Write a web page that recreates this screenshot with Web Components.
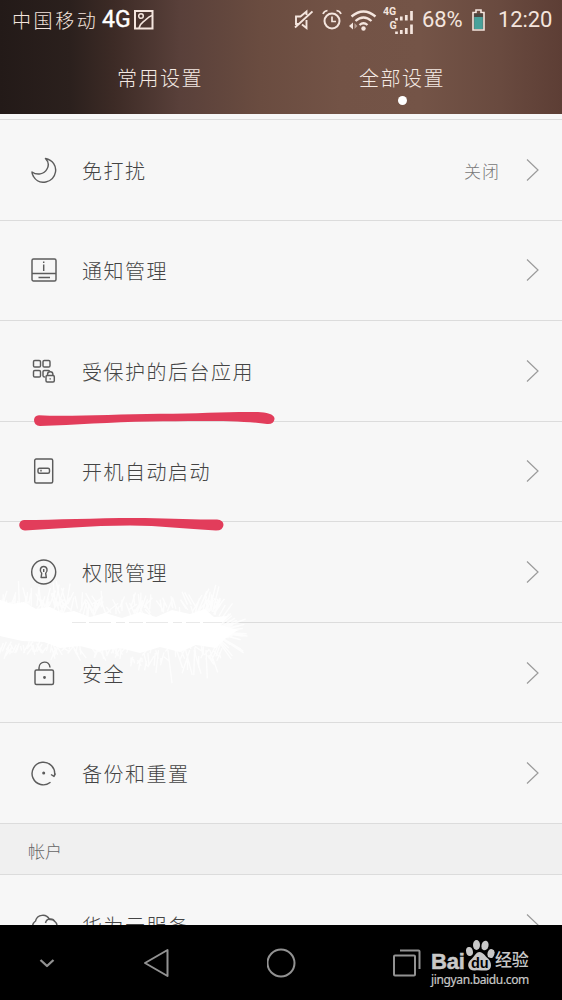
<!DOCTYPE html>
<html lang="zh-CN">
<head>
<meta charset="UTF-8">
<title>设置</title>
<style>
    body {
        margin: 0;
        width: 562px;
        height: 1000px;
        overflow: hidden;
        background: #f7f7f7;
        font-family: 'Noto Sans CJK SC', sans-serif;
        font-weight: 300;
    }
</style>
</head>
<body>
<settings-screen></settings-screen>
<script>
const ICONS = {
    moon: '<path d="M15.500 2.500C23 4 26.500 10 25.500 16C23.500 27 9 30 3.500 20.500C2.500 19 2 17.500 2 16C7 19.500 14 18.500 17 13C19 9.500 18.500 5.500 15.500 2.500Z"/>',
    notice: '<rect x="2" y="3" width="24" height="22" rx="1.500"/><path d="M2 17.500H26M8.500 21.500H20M13.700 8.500V15M13.700 5.600V7"/>',
    apps: '<rect x="3.500" y="3.500" width="7" height="6.500" rx="1.300"/><rect x="13" y="3.500" width="7" height="6.500" rx="1.300"/><rect x="3.500" y="13.500" width="7" height="6.500" rx="1.300"/><path d="M15 20Q13 20 13 18.700V14.700Q13 13.500 14.300 13.500H18.500Q19.500 13.500 19.700 14.500"/><rect x="16" y="18.500" width="8.300" height="6.500" rx="1.200"/><path d="M17.500 18.500V17.500a2.700 2.700 0 0 1 5.400 0V18.500M20.200 21.300V22.500"/>',
    boot: '<rect x="4.700" y="2" width="18" height="24" rx="1.500"/><rect x="8" y="11.200" width="11.500" height="5" rx="1.500"/><path d="M11 12.800V14.500"/>',
    permission: '<circle cx="13.700" cy="14" r="12"/><path d="M11.700 15.300C9.200 13 10.200 8.500 13.700 8.500S18.200 13 15.700 15.300L16.300 19.500H11.100L11.700 15.300Z"/><path d="M13.700 11V14"/>',
    security: '<rect x="5" y="11" width="18.500" height="14.500" rx="1.500"/><path d="M9 11V9C9 1.500 19.500 1 20 8.500"/><circle cx="14.500" cy="18.500" r=".7"/>',
    backup: '<path d="M20.500 23.300A11.300 11.300 0 1 1 24.500 16.500M21 15.500L24 17.400L25.500 14.500"/><circle cx="13.700" cy="14" r=".8"/>',
    cloud: '<path d="M5.500 22A7.500 7.500 0 0 1 5.500 10A7.500 7.500 0 0 1 19.500 8.500A6 6 0 0 1 21 22ZM15.500 12A5 5 0 0 1 25 11"/>'
};

class LineIcon extends HTMLElement {
    constructor() {
        super();
        this.attachShadow({ mode: 'open' });
    }

    connectedCallback() {
        this.shadowRoot.innerHTML = `
            <style>
                :host { display: block; width: 28px; height: 28px; flex: none; }
                svg { display: block; fill: none; stroke: #5c5c5c; stroke-width: 1.45; stroke-linejoin: round; }
            </style>
            <svg width="28" height="28" viewBox="0 0 28 28">${ICONS[this.getAttribute('name')]}</svg>
        `;
    }
}
customElements.define('line-icon', LineIcon);

class StatusBar extends HTMLElement {
    constructor() {
        super();
        this.attachShadow({ mode: 'open' }).innerHTML = `
            <style>
                :host {
                    display: flex;
                    align-items: center;
                    box-sizing: border-box;
                    height: 40px;
                    padding: 0 10px 0 12px;
                    color: #f4e5de;
                    font-family: Roboto, sans-serif;
                    font-weight: 400;
                    line-height: 40px;
                    white-space: nowrap;
                }
                .carrier { font: 300 19px/40px 'Noto Sans CJK SC', sans-serif; letter-spacing: 2.600px; width: 90px; }
                .network { font-size: 23px; font-weight: 400; color: #fff; width: 32px; -webkit-text-stroke: .4px #fff; }
                .spacer { flex: 1; }
                .percent { font-size: 22px; width: 50px; letter-spacing: -.1px; }
                .time { font-size: 22px; width: 54px; letter-spacing: -.1px; }
                svg { display: block; flex: none; fill: none; stroke: currentColor; stroke-width: 2; }
                .fill { fill: currentColor; stroke: none; }
            </style>
            <span class="carrier">中国移动</span>
            <span class="network">4G</span>
            <svg width="20" height="20" viewBox="0 0 20 20"><rect x="1" y="1" width="17.500" height="17.500"/><circle cx="7" cy="6" r="2.300" stroke-width="1.500"/><path d="M5 18C6 13 9 12.500 12 9.500C14 7.500 16 6 18 5.500" stroke-width="1.700"/></svg>
            <span class="spacer"></span>
            <svg style="margin-right:9px" width="19" height="22" viewBox="0 0 19 22"><path d="M5.500 15H2V7.500H6.500L12.500 2.500V6M12.500 11V19L8 15.500M18.500 2.500L1 18.500" stroke-width="1.900"/></svg>
            <svg style="margin-right:7px" width="20" height="22" viewBox="0 0 20 22"><circle cx="10" cy="12" r="7.500"/><path d="M10 7.500V12.500H14M1 5Q2 2 5.500 1.500M19 5Q18 2 14.500 1.500" stroke-width="1.700"/></svg>
            <svg style="margin-right:6px" width="28" height="24" viewBox="0 0 28 24"><path d="M2.500 8.500Q14.500 -1.500 26.500 8.500M6.500 13Q14.500 6 22.500 13M10.500 17Q14.500 13.500 18.500 17" stroke-width="2.300"/><circle class="fill" cx="14.500" cy="20.500" r="2.200"/><path class="fill" d="M0 18L4 14.500V21.500Z"/><path class="fill" d="M8.500 18L5.500 15V21Z" opacity=".5"/></svg>
            <svg style="margin-right:8px" width="31" height="30" viewBox="0 0 31 30"><text class="fill" x="0" y="10" font-size="10.500" font-weight="700">4G</text><text class="fill" x="6.500" y="23.500" font-size="10.500" font-weight="700">G</text><path d="M13.500 13V15.500M18.300 11.500V15.500M23.300 10V15.500M28.500 6V15.500M13.500 26.500V29M18.300 25V29M23.300 23V29M28.500 19.500V29" stroke-width="2.700"/></svg>
            <span class="percent">68%</span>
            <svg style="margin-right:13px" width="13" height="22" viewBox="0 0 13 22"><path d="M1 3.500H4V1H9V3.500H12V21H1Z" stroke-width="1.600"/><path d="M2.200 4.500H10.800V8H2.200Z" fill="#4c4741" stroke="none"/><path d="M2.200 8H10.800V20H2.200Z" fill="#48a19a" stroke="none"/></svg>
            <span class="time">12:20</span>
        `;
    }
}
customElements.define('status-bar', StatusBar);

class TabHeader extends HTMLElement {
    constructor() {
        super();
        this.attachShadow({ mode: 'open' }).innerHTML = `
            <style>
                :host {
                    display: block;
                    height: 114px;
                    background: linear-gradient(90deg, #231a18 0, #2b201d 70px, #3d2b26 115px, #59403a 180px, #6a4c40 260px, #735346 340px, #745447 420px, #694a3f 500px, #5d3e35 562px);
                }
                .tabs { display: grid; grid-template-columns: 242px 242px; padding-left: 39px; }
                .tab {
                    display: flex;
                    flex-direction: column;
                    align-items: center;
                    height: 74px;
                    box-sizing: border-box;
                    padding-top: 23px;
                    color: #f4e9e3;
                    font-size: 20px;
                    line-height: 30px;
                    letter-spacing: 1.500px;
                }
                .dot { width: 9px; height: 9px; border-radius: 50%; background: #fff; margin-top: 3px; }
            </style>
            <status-bar></status-bar>
            <div class="tabs">
                <div class="tab"><span>常用设置</span></div>
                <div class="tab"><span>全部设置</span><div class="dot"></div></div>
            </div>
        `;
    }
}
customElements.define('tab-header', TabHeader);

class SettingRow extends HTMLElement {
    constructor() {
        super();
        this.attachShadow({ mode: 'open' });
    }

    connectedCallback() {
        this.shadowRoot.innerHTML = `
            <style>
                :host {
                    display: flex;
                    align-items: center;
                    box-sizing: border-box;
                    height: 100.57px;
                    padding: 0 23px 0 30px;
                    border-bottom: 1px solid #dcdcdc;
                    color: #444;
                }
                .label { flex: 1; margin-left: 24px; font-size: 20px; line-height: 30px; letter-spacing: 1.500px; padding-top: 2px; }
                .value { color: #777; font-size: 17px; line-height: 28px; letter-spacing: 1px; margin-right: 26px; padding-top: 2px; }
                .arrow { display: block; fill: none; stroke: #9b9b9b; stroke-width: 1.200; }
            </style>
            <line-icon name="${this.getAttribute('icon')}"></line-icon>
            <span class="label"><slot></slot></span>
            <span class="value"><slot name="value"></slot></span>
            <svg class="arrow" width="13" height="24" viewBox="0 0 13 24"><path d="M1 1.500L12 12L1 22.500"/></svg>
        `;
    }
}
customElements.define('setting-row', SettingRow);

class SectionTitle extends HTMLElement {
    constructor() {
        super();
        this.attachShadow({ mode: 'open' }).innerHTML = `
            <style>
                :host {
                    display: block;
                    box-sizing: border-box;
                    height: 51px;
                    padding: 13px 28px 0;
                    background: #f0f0f0;
                    border-bottom: 1px solid #dcdcdc;
                    color: #666;
                    font-size: 17px;
                    line-height: 28px;
                }
            </style>
            <slot></slot>
        `;
    }
}
customElements.define('section-title', SectionTitle);

// hand-drawn red lines and the white brush smear lying over the list
class MarkerLayer extends HTMLElement {
    constructor() {
        super();
        this.attachShadow({ mode: 'open' });
    }

    connectedCallback() {
        this.shadowRoot.innerHTML = `
            <style>
                :host { display: block; position: absolute; top: 0; left: 0; pointer-events: none; }
                svg { display: block; }
            </style>
            <svg width="562" height="925" viewBox="0 0 562 925">
                <path d="M0 600L12 604L24 602L36 609L50 607L62 613L74 611L90 617L105 613L122 618L140 612L156 617L172 610L190 614L205 609L214 617L228 616L220 625L238 630L226 638L216 648L196 645L180 652L160 647L140 653L120 648L100 651L80 646L60 648L44 642L22 641L0 636Z" fill="#fff"/>
                <path d="${this.strands()}" fill="none" stroke="#fff" stroke-width="1.400" opacity=".75"/>
                <path d="M72 622.500H222" stroke="#e9e9e9" stroke-dasharray="14 3 22 5 9 4"/>
                <path d="M39 415.300C70 417 115 414 160 413.700C200 413.500 230 411.500 258 412C266 412.500 275 414 274.500 419Q274 424.500 267 424C240 420 190 421 150 421.500C110 422 75 425 40 426C32.500 426 32 415.500 39 415.300Z" fill="#e23d5b"/>
                <path d="M24 520C55 520 95 518 135 518C165 518 193 520 217 519.500Q223.500 520 223.500 525Q223 530.500 216 530.500C185 529 160 525.500 130 525.500C90 525.500 55 529 25 530.500C17.500 530 17.500 520.500 24 520Z" fill="#e23d5b"/>
            </svg>
        `;
    }

    strands() {
        let seed = 4177;
        const rnd = () => (seed = seed * 16807 % 2147483647) / 2147483647;
        let d = '';
        const line = (x, y, dx, dy) => {
            d += `M${x.toFixed(1)} ${y.toFixed(1)}l${dx.toFixed(1)} ${dy.toFixed(1)}`;
        };
        // upper fringe
        for (let i = 0; i < 130; i++) {
            const x = rnd() * 222;
            line(x, 618 - rnd() * 14, (rnd() - 0.5) * 16, -4 - rnd() * 11);
        }
        // lower fringe, longer to the right
        for (let i = 0; i < 120; i++) {
            const x = rnd() * 222;
            const y = 641 + rnd() * (x > 130 ? 20 : 8);
            line(x, y, (rnd() - 0.5) * 14, 4 + rnd() * 9);
        }
        // tall spikes near the key icon and at the right end
        for (let i = 0; i < 16; i++) {
            line(12 + rnd() * 55, 606, (rnd() - 0.5) * 14, -12 - rnd() * 14);
        }
        for (let i = 0; i < 12; i++) {
            line(192 + rnd() * 22, 612, 4 + rnd() * 12, -12 - rnd() * 18);
        }
        for (let i = 0; i < 9; i++) {
            line(155 + rnd() * 55, 650, (rnd() - 0.5) * 20, 16 + rnd() * 18);
        }
        for (let i = 0; i < 36; i++) {
            const a = (rnd() - 0.5) * 2;
            const r = 16 + rnd() * 22;
            line(212, 632, Math.cos(a) * r, Math.sin(a) * r);
        }
        return d;
    }
}
customElements.define('marker-layer', MarkerLayer);

class BaiduMark extends HTMLElement {
    constructor() {
        super();
        this.attachShadow({ mode: 'open' }).innerHTML = `
            <style>
                :host { display: block; width: 102px; color: #c8c8c8; white-space: nowrap; }
                .brand { display: flex; align-items: flex-end; height: 32px; }
                .bai { font: 700 22px/24px 'Liberation Sans', sans-serif; width: 34px; margin-bottom: -3px; letter-spacing: -.2px; -webkit-text-stroke: .5px #c8c8c8; }
                .jy { font: 500 17px/22px 'Noto Sans CJK SC', sans-serif; letter-spacing: -.3px; margin-bottom: 1px; }
                .url { font: 400 12px/18px 'Noto Sans', 'Open Sans', sans-serif; letter-spacing: -.35px; -webkit-text-stroke: .2px #c8c8c8; }
                svg { display: block; fill: #c8c8c8; flex: none; }
            </style>
            <div class="brand">
                <span class="bai">Bai</span>
                <svg width="30" height="32" viewBox="0 0 30 32">
                    <ellipse cx="4.500" cy="12.500" rx="3.400" ry="4.500" transform="rotate(-12 4.500 12.500)"/>
                    <ellipse cx="11.500" cy="6" rx="3.500" ry="5"/>
                    <ellipse cx="20" cy="6.500" rx="3.500" ry="4.800" transform="rotate(15 20 6.500)"/>
                    <ellipse cx="26" cy="14.500" rx="3.400" ry="4.500" transform="rotate(15 26 14.500)"/>
                    <path d="M14.500 13C18 13 20 17 23 19.500C27 23 27.500 31 21.500 31.500C18 32 14 30.700 10 31.500C3 32 1.500 25 5 21.500C10 17.500 10.500 13 14.500 13Z"/>
                    <text x="6" y="28.500" fill="#000" font-family="Liberation Sans, sans-serif" font-size="14.500" font-weight="700">du</text>
                </svg>
                <span class="jy">经验</span>
            </div>
            <div class="url">jingyan.baidu.com</div>
        `;
    }
}
customElements.define('baidu-mark', BaiduMark);

class NavKeys extends HTMLElement {
    constructor() {
        super();
        this.attachShadow({ mode: 'open' }).innerHTML = `
            <style>
                :host {
                    display: flex;
                    align-items: center;
                    position: relative;
                    box-sizing: border-box;
                    height: 75px;
                    padding-left: 39px;
                    background: #000;
                }
                svg { display: block; flex: none; fill: none; stroke: #929292; stroke-width: 2; stroke-linejoin: round; }
                baidu-mark { position: absolute; left: 431px; top: 14px; }
            </style>
            <svg style="margin-right:88px" width="16" height="12" viewBox="0 0 16 12"><path d="M1.500 3L8 9L14.500 3" stroke-width="2.300"/></svg>
            <svg style="margin-right:96px" width="28" height="30" viewBox="0 0 28 30"><path d="M2 15L24.500 2V28Z"/></svg>
            <svg style="margin-right:96px" width="30" height="30" viewBox="0 0 30 30"><circle cx="14" cy="15" r="13.500"/></svg>
            <svg width="30" height="30" viewBox="0 0 30 30"><rect x="1" y="7.500" width="21" height="20" rx="1"/><path d="M7 2.500H25.500Q26.500 2.500 26.500 3.500V21"/></svg>
            <baidu-mark></baidu-mark>
        `;
    }
}
customElements.define('nav-keys', NavKeys);

class SettingsScreen extends HTMLElement {
    constructor() {
        super();
        this.attachShadow({ mode: 'open' }).innerHTML = `
            <style>
                :host { display: flex; flex-direction: column; position: relative; height: 1000px; overflow: hidden; }
                main { height: 811px; overflow: hidden; background: #f7f7f7; }
                .edge { height: 5px; border-bottom: 1px solid #dcdcdc; }
            </style>
            <tab-header></tab-header>
            <main>
                <div class="edge"></div>
                <setting-row icon="moon">免打扰<span slot="value">关闭</span></setting-row>
                <setting-row icon="notice">通知管理</setting-row>
                <setting-row icon="apps">受保护的后台应用</setting-row>
                <setting-row icon="boot">开机自动启动</setting-row>
                <setting-row icon="permission">权限管理</setting-row>
                <setting-row icon="security">安全</setting-row>
                <setting-row icon="backup">备份和重置</setting-row>
                <section-title>帐户</section-title>
                <setting-row icon="cloud">华为云服务</setting-row>
            </main>
            <nav-keys></nav-keys>
            <marker-layer></marker-layer>
        `;
    }
}
customElements.define('settings-screen', SettingsScreen);
</script>
</body>
</html>
